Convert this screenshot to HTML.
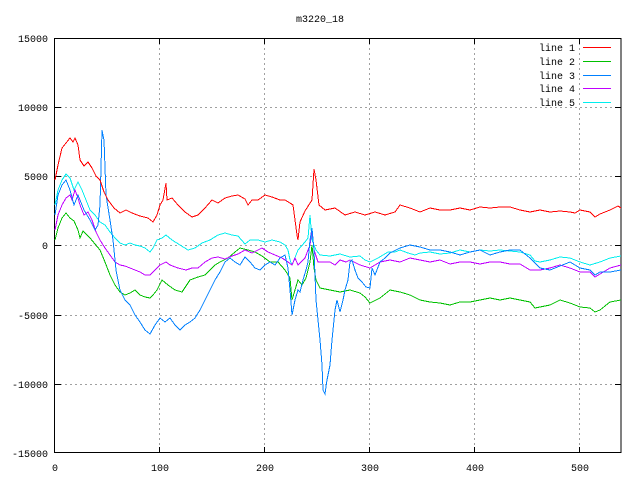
<!DOCTYPE html>
<html><head><meta charset="utf-8"><style>
html,body{margin:0;padding:0;background:#fff;}
svg{display:block;font-family:"Liberation Mono",monospace;font-size:10px;}
</style></head><body>
<svg width="640" height="480" viewBox="0 0 640 480" xmlns="http://www.w3.org/2000/svg">
<rect width="640" height="480" fill="#fff"/>
<g stroke="#a0a0a0" stroke-dasharray="2,3" stroke-width="1" fill="none">
<line x1="55" y1="107.5" x2="621" y2="107.5"/>
<line x1="55" y1="176.5" x2="621" y2="176.5"/>
<line x1="55" y1="245.5" x2="621" y2="245.5"/>
<line x1="55" y1="315.5" x2="621" y2="315.5"/>
<line x1="55" y1="384.5" x2="621" y2="384.5"/>
<line x1="159.5" y1="38" x2="159.5" y2="453"/>
<line x1="264.5" y1="38" x2="264.5" y2="453"/>
<line x1="369.5" y1="38" x2="369.5" y2="453"/>
<line x1="474.5" y1="38" x2="474.5" y2="453"/>
<line x1="579.5" y1="38" x2="579.5" y2="453"/>
</g>
<g stroke="#000" stroke-width="1">
<path d="M55,38.5h6M55,107.5h6M55,176.5h6M55,245.5h6M55,315.5h6M55,384.5h6M55,452.5h6M621,38.5h-6M621,107.5h-6M621,176.5h-6M621,245.5h-6M621,315.5h-6M621,384.5h-6M621,452.5h-6"/>
<path d="M54.5,453v-6M159.5,453v-6M264.5,453v-6M369.5,453v-6M474.5,453v-6M579.5,453v-6M159.5,38v6M264.5,38v6M369.5,38v6M474.5,38v6M579.5,38v6"/>
<rect x="54.5" y="38.5" width="566.5" height="414" fill="none"/>
</g>
<g fill="#000" text-anchor="end">
<text x="48" y="42">15000</text>
<text x="48" y="111">10000</text>
<text x="48" y="180">5000</text>
<text x="48" y="249">0</text>
<text x="48" y="319">-5000</text>
<text x="48" y="388">-10000</text>
<text x="48" y="457">-15000</text>
</g>
<g fill="#000" text-anchor="middle">
<text x="55" y="471">0</text>
<text x="160" y="471">100</text>
<text x="265" y="471">200</text>
<text x="370" y="471">300</text>
<text x="475" y="471">400</text>
<text x="580" y="471">500</text>
<text x="320" y="22">m3220_18</text>
</g>
<g fill="#000" text-anchor="end">
<text x="575" y="51">line 1</text>
<text x="575" y="65">line 2</text>
<text x="575" y="79">line 3</text>
<text x="575" y="92">line 4</text>
<text x="575" y="106">line 5</text>
</g>
<rect x="583" y="47" width="28" height="1" fill="#ff0000"/>
<rect x="583" y="61" width="28" height="1" fill="#00c000"/>
<rect x="583" y="75" width="28" height="1" fill="#0080ff"/>
<rect x="583" y="88" width="28" height="1" fill="#c000ff"/>
<rect x="583" y="102" width="28" height="1" fill="#00eeee"/>
<g fill="none" stroke-width="1" shape-rendering="crispEdges">
<polyline stroke="#00eeee" points="55,205 58,190 62,180 66,174 70,178 74,190 78,182 82,190 86,200 90,210 95,215 100,222 105,225 110,232 115,238 120,243 125,245 130,243 135,245 140,246 145,248 150,252 153,248 157,240 162,238 166,235 172,240 180,245 188,250 195,248 202,243 210,240 218,235 225,233 232,235 238,236 245,244 250,240 258,240 265,242 272,240 280,242 285,245 288,250 290,260 292,265 298,250 305,242 308,238 310,215 312,240 316,250 320,255 330,256 340,254 350,257 360,256 365,260 370,262 378,258 388,252 395,252 400,250 408,253 415,255 420,253 430,252 440,254 450,253 460,250 470,252 480,250 490,251 500,250 510,251 520,252 530,255 535,261 540,262 550,260 560,257 570,258 580,262 590,265 600,262 610,258 621,256"/>
<polyline stroke="#00c000" points="55,240 58,228 62,218 66,213 70,218 74,221 78,230 80,238 83,231 86,234 90,238 95,244 100,250 105,262 110,275 115,285 120,292 125,295 130,293 135,290 140,295 145,297 150,298 153,295 157,290 162,280 168,285 175,290 182,292 190,280 198,277 205,275 210,270 215,265 220,262 228,258 235,252 240,248 248,250 255,252 262,256 270,262 278,262 285,270 290,278 292,300 295,290 298,280 302,285 306,278 310,262 312,245 314,268 316,280 320,288 330,290 340,292 350,290 360,293 365,297 370,303 380,298 390,290 400,292 410,295 420,300 430,302 440,303 450,305 460,302 470,302 480,300 490,298 500,300 510,298 520,300 530,302 535,308 540,307 550,305 560,300 570,303 580,307 590,308 595,312 600,310 610,302 621,300"/>
<polyline stroke="#c000ff" points="55,230 58,215 62,205 66,198 70,195 72,200 75,190 78,198 80,205 84,215 88,212 92,220 96,232 100,240 105,248 110,255 115,262 120,265 125,266 130,268 135,270 140,272 145,275 150,275 155,270 160,265 166,262 170,265 178,268 186,270 192,268 198,268 205,262 212,258 218,257 225,259 232,256 238,254 245,250 252,253 258,250 262,248 268,252 275,255 282,258 288,262 292,265 295,258 298,265 305,258 310,245 312,230 314,250 318,262 325,262 330,262 335,265 340,260 346,262 350,260 360,265 370,268 380,262 390,260 400,262 410,258 420,260 430,262 440,260 450,264 460,262 470,262 480,264 490,262 500,262 510,264 520,264 530,270 540,270 550,268 560,265 570,268 580,272 590,272 595,277 600,274 610,268 621,265"/>
<polyline stroke="#0080ff" points="55,215 58,195 62,185 66,180 70,190 74,205 78,195 80,200 84,210 90,220 95,230 98,225 100,205 102,130 104,140 106,195 110,220 113,240 116,270 120,290 125,300 130,305 135,315 140,322 145,330 150,334 155,325 160,318 165,322 170,318 175,325 180,330 185,325 190,322 195,318 200,310 205,300 210,290 215,280 220,272 225,262 230,258 235,262 240,265 245,257 250,262 255,268 260,270 265,265 270,262 275,265 280,258 285,255 288,268 290,290 292,315 295,300 298,290 300,292 303,280 306,270 308,262 310,240 312,228 314,250 316,300 318,320 320,340 322,365 323,390 325,394 327,380 330,365 332,340 335,310 337,300 340,312 343,300 345,290 348,280 350,262 352,260 355,270 358,278 362,282 366,287 370,288 372,268 375,275 380,262 385,258 390,253 400,248 410,245 420,247 430,250 440,250 450,252 460,255 470,252 480,250 490,255 500,252 510,250 520,250 530,258 540,268 550,270 560,266 570,262 580,268 590,270 595,275 600,272 610,272 621,270"/>
<polyline stroke="#ff0000" points="55,180 58,165 62,148 66,143 70,138 73,142 75,138 78,145 80,160 84,166 88,162 92,168 96,176 100,180 104,192 108,200 114,208 120,213 126,210 132,213 140,216 148,218 153,222 157,215 160,205 163,200 166,183 167,200 172,198 178,205 185,212 192,217 198,215 205,208 212,200 218,203 225,198 232,196 238,195 245,199 248,205 252,200 258,200 265,195 272,197 280,200 285,200 290,203 293,205 295,220 297,235 298,240 300,222 305,211 312,200 314,169 316,180 319,205 325,210 335,208 345,215 355,212 365,215 375,212 385,215 395,212 400,205 410,208 420,212 430,208 440,210 450,210 460,208 470,210 480,207 490,208 500,207 510,207 520,210 530,212 540,210 550,212 560,211 570,212 575,213 580,210 590,212 595,217 600,214 610,210 618,206 621,208"/>
</g>
</svg>
</body></html>
